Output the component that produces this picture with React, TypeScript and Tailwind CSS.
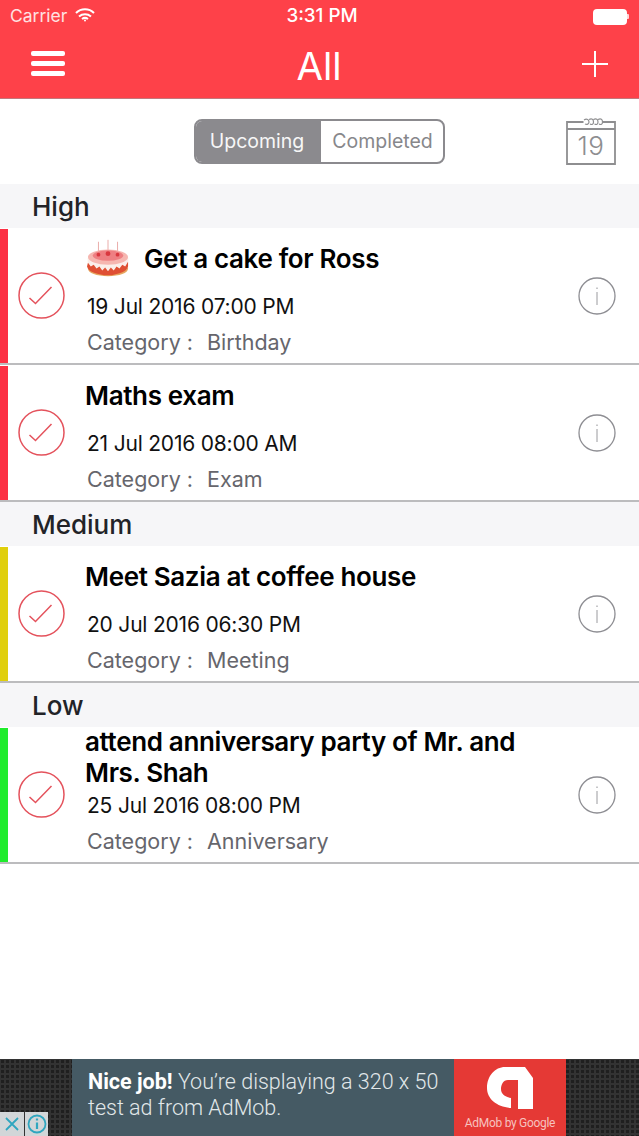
const sections = [
  {
    name: "High",
    bar: "bg-[#fc3044]",
    tasks: [
      { title: "Get a cake for Ross", date: "19 Jul 2016 07:00 PM", category: "Birthday", cake: true },
      { title: "Maths exam", date: "21 Jul 2016 08:00 AM", category: "Exam" },
    ],
  },
  {
    name: "Medium",
    bar: "bg-[#e0cf0c]",
    tasks: [{ title: "Meet Sazia at coffee house", date: "20 Jul 2016 06:30 PM", category: "Meeting" }],
  },
  {
    name: "Low",
    bar: "bg-[#1fec2c]",
    tasks: [
      { title: "attend anniversary party of Mr. and Mrs. Shah", date: "25 Jul 2016 08:00 PM", category: "Anniversary" },
    ],
  },
];

function Cake() {
  return (
    <svg width="42" height="38" viewBox="0 0 44 38" className="ml-[2px] mr-[15px] shrink-0">
      <g stroke="#e9a9a6" strokeWidth="1">
        <path d="M12 2v11M22 0v11M32 2v11" />
      </g>
      <path d="M1 19v11c0 5 9 8 21 8s21-3 21-8V19z" fill="#e6a65f" />
      <path d="M1 19v8c0 5 9 8 21 8s21-3 21-8v-8z" fill="#fbeeea" />
      <path
        d="M1 24l3 4 3-2 3 4 3-2 3 4 3-3 3 4 3-4 3 3 3-4 3 2 3-4 3 2 3-5v5c-1 3-3 5-6 6l-3 1-4 1-4 1h-8l-5-1-4-1-3-1c-3-1-5-3-6-6z"
        fill="#df4f33"
      />
      <ellipse cx="22" cy="18" rx="21" ry="8" fill="#f6b6b0" />
      <ellipse cx="22" cy="16.500" rx="16" ry="5.500" fill="#ee7f82" />
      <circle cx="22" cy="14.500" r="2.500" fill="#d9383f" />
      <circle cx="12" cy="15.500" r="2" fill="#d9383f" />
      <circle cx="32" cy="15.500" r="2" fill="#d9383f" />
    </svg>
  );
}

function CheckCircle() {
  return (
    <svg width="47" height="47" viewBox="0 0 47 47" fill="none" stroke="#e4525c" strokeWidth="1.500">
      <circle cx="23.500" cy="23.500" r="22.500" />
      <path d="M11.500 26l6 5.500L33.500 15" />
    </svg>
  );
}

function InfoCircle() {
  return (
    <svg width="38" height="38" viewBox="0 0 38 38" fill="none" stroke="#8e8e93" strokeWidth="1.300">
      <circle cx="19" cy="19" r="18" />
      <path d="M19 15v13" strokeWidth="0.900" />
      <path d="M19 10.500v1.500" strokeWidth="1" />
    </svg>
  );
}

function CalendarIcon() {
  return (
    <div className="relative h-[47px] w-[50px] text-[#8e8e90]">
      <svg width="50" height="47" viewBox="0 0 50 47" fill="none" stroke="currentColor" strokeWidth="1.800">
        <path d="M1 4h48v42H1zM1 11h48" />
        <path d="M17 4h20" stroke="#fff" strokeWidth="2.500" />
        <g strokeWidth="1.200">
          <path d="M15 4h3M36 4h2" />
          <path d="M18 2c3-2 5 0 5 2s-2 3-4 2M23 1.500c3-1.500 4.500 0 4.500 2.500s-1.500 3-3.500 2M27.500 1.500c3-1.500 4.500 0 4.500 2.500s-1.500 3-3.500 2M32 1.500c3-1.500 4.500 0 4.500 2.500s-1.500 3-3.500 2" />
        </g>
      </svg>
      <span className="absolute inset-x-0 top-[10px] text-center text-[26px] leading-[36px] font-light tracking-[0.5px]">19</span>
    </div>
  );
}

function TaskRow({ task, bar }: { task: { title: string; date: string; category: string; cake?: boolean }; bar: string }) {
  return (
    <div className="flex h-[137px] border-b-2 border-[#bcbcbe] bg-white">
      <div className={`w-2 shrink-0 ${bar} mt-[1px]`} />
      <div className="flex w-[77px] shrink-0 items-center justify-center pr-[11px]">
        <CheckCircle />
      </div>
      <div className="min-w-0 flex-1 pr-[40px]">
        <div className="flex h-[60px] items-center text-[26px] leading-[31px] font-semibold tracking-[-0.35px] text-black">
          {task.cake && <Cake />}
          <span>{task.title}</span>
        </div>
        <div className="h-[36px] pl-[2px] text-[21px] leading-[38px] tracking-[-0.2px] whitespace-nowrap text-[#111]">{task.date}</div>
        <div className="flex h-[36px] pl-[2px] text-[21.500px] leading-[36px] whitespace-nowrap text-[#66666c]">
          <span className="w-[120px] shrink-0">Category :</span>
          <span>{task.category}</span>
        </div>
      </div>
      <div className="flex w-[61px] shrink-0 items-center">
        <InfoCircle />
      </div>
    </div>
  );
}

export default function App() {
  return (
    <div className="flex h-[1136px] w-[639px] flex-col overflow-hidden bg-white font-['Inter','Liberation_Sans',sans-serif]">
      {/* Nav bar */}
      <header className="h-[99px] shrink-0 border-b border-[#c2787c] bg-[#fe4149] text-white">
        <div className="flex h-[33px] items-center justify-between pl-[10px] pr-[10px]">
          <div className="flex w-[120px] items-center gap-[8px] text-[17.500px] text-[#ffe1e2]">
            <span>Carrier</span>
            <svg width="20" height="14" viewBox="0 0 20 14" fill="none" stroke="#fff" strokeWidth="2" className="mb-[3px]">
              <path d="M1 5c5-5 13-5 18 0M4 8.500c3.500-3 8.500-3 12 0M7 11c2-1.500 4-1.500 6 0" />
              <circle cx="10" cy="12.500" r="1" fill="#fff" stroke="none" />
            </svg>
          </div>
          <span className="pl-[5px] text-[18.800px] font-medium">3:31 PM</span>
          <div className="flex w-[120px] items-center justify-end">
            <div className="h-[16px] w-[34px] rounded-[4px] bg-white" />
            <div className="h-[5px] w-[2px] rounded-r-[1px] bg-[#ffd5d7]" />
          </div>
        </div>
        <div className="flex h-[65px] items-start justify-between pl-[31px] pr-[30px]">
          <div className="mt-[18px] flex w-[34px] flex-col gap-[5px]">
            <div className="h-[5px] rounded-[2px] bg-white" />
            <div className="h-[5px] rounded-[2px] bg-white" />
            <div className="h-[5px] rounded-[2px] bg-white" />
          </div>
          <span className="mt-[9px] pr-[8px] text-[38.500px] leading-[48px]">All</span>
          <svg width="28" height="28" viewBox="0 0 28 28" stroke="#fff" strokeWidth="2" className="mt-[17px]">
            <path d="M14 1v26M1 14h26" />
          </svg>
        </div>
      </header>

      {/* Upcoming / Completed */}
      <div className="flex h-[85px] shrink-0 items-center justify-end pr-[23px]">
        <div className="mr-[121px] flex h-[45px] w-[251px] overflow-hidden rounded-[8px] border-2 border-[#8b8a8e] text-[19.500px]">
          <div className="flex w-[125px] items-center justify-center bg-[#8b8a8e] pr-[3px] text-[#f7f7f7]">Upcoming</div>
          <div className="flex flex-1 items-center justify-center pl-px text-[#87878b]">Completed</div>
        </div>
        <CalendarIcon />
      </div>

      {/* Task list */}
      {sections.map((section) => (
        <section key={section.name}>
          <div className="flex h-[44px] items-center bg-[#f6f6f8] pl-[32px] text-[26px] font-medium text-[#222327]">
            {section.name}
          </div>
          {section.tasks.map((task) => (
            <TaskRow key={task.title} task={task} bar={section.bar} />
          ))}
        </section>
      ))}

      {/* Ad banner */}
      <div className="relative mt-auto flex h-[77px] shrink-0 bg-[#333333] bg-[radial-gradient(#1f1f1f_1.500px,transparent_1.500px)] bg-[length:5px_5px] font-['Roboto',sans-serif]">
        <div className="ml-[72px] flex w-[382px] flex-col bg-[#455a64] pl-[16px] pt-[10px] text-[21.500px] leading-[26px] text-[#e2e8ea]">
          <div className="whitespace-nowrap font-light">
            <b className="font-bold text-white">Nice job!</b> You’re displaying a 320 x 50
          </div>
          <div className="font-light">test ad from AdMob.</div>
        </div>
        <div className="flex w-[112px] flex-col items-center bg-[#e53935] pt-[8px]">
          <svg width="46" height="42" viewBox="0 0 46 42">
            <path
              d="M18 0H38L46 11V42H31V13H21C16 13 14 18 14 22C14 27 18 30 24 31V41C10 40 0 32 0 21C0 9 8 0 18 0Z"
              fill="#fff"
            />
          </svg>
          <span className="mt-[6px] text-[12px] leading-[16px] tracking-[-0.3px] whitespace-nowrap text-[#f6c2bf]">AdMob by Google</span>
        </div>
        <div className="absolute bottom-0 left-0 flex h-[24px]">
          <div className="flex w-[24px] items-center justify-center bg-[#d2d6d8]">
            <svg width="16" height="16" viewBox="0 0 16 16" stroke="#2fa6bf" strokeWidth="1.800">
              <path d="M2 2l12 12M14 2L2 14" />
            </svg>
          </div>
          <div className="ml-px flex w-[23px] items-center justify-center bg-[#d2d6d8]">
            <svg width="20" height="20" viewBox="0 0 20 20" fill="none" stroke="#2fa6bf" strokeWidth="1.800">
              <circle cx="10" cy="10" r="8.500" />
              <path d="M10 8.500v6.500M10 4.500v2" strokeWidth="2.200" />
            </svg>
          </div>
        </div>
      </div>
    </div>
  );
}
